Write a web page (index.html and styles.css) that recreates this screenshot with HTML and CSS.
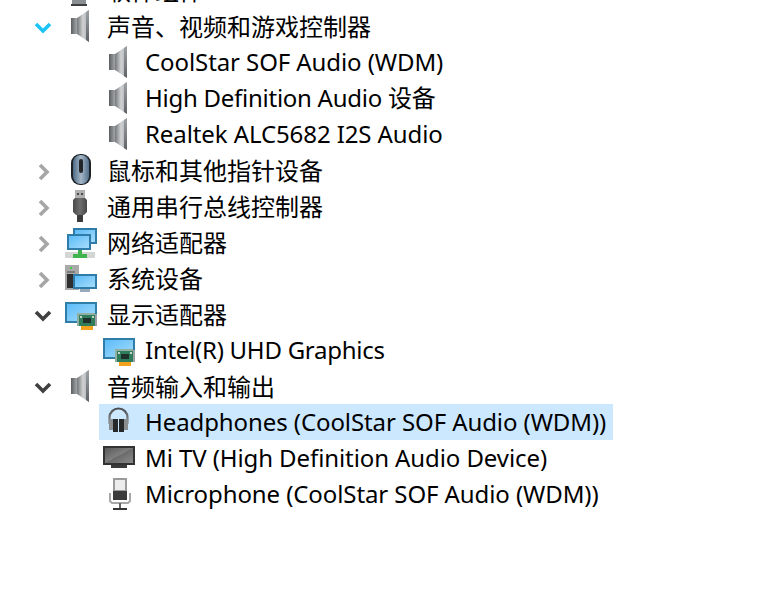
FILE: index.html
```html
<!DOCTYPE html>
<html lang="zh-CN">
<head>
<meta charset="utf-8">
<title>设备管理器</title>
<link rel="stylesheet" href="styles.css">
</head>
<body>
<svg class="defs" width="0" height="0" aria-hidden="true">
  <defs>
    <linearGradient id="cone" x1="0" x2="1" y1="0" y2="0">
      <stop offset="0" stop-color="#74787b"/>
      <stop offset=".5" stop-color="#cfd1d3"/>
      <stop offset="1" stop-color="#a9acaf"/>
    </linearGradient>
    <linearGradient id="block" x1="0" x2="1" y1="0" y2="0">
      <stop offset="0" stop-color="#5a5e62"/>
      <stop offset="1" stop-color="#a4a7aa"/>
    </linearGradient>
    <linearGradient id="rim" x1="0" x2="0" y1="0" y2="1">
      <stop offset="0" stop-color="#9ea3a8"/>
      <stop offset=".5" stop-color="#7e8388"/>
      <stop offset="1" stop-color="#5e6266"/>
    </linearGradient>
    <linearGradient id="screen" x1="0" x2="1" y1="0" y2="1">
      <stop offset="0" stop-color="#5cbcf8"/>
      <stop offset="1" stop-color="#a6dcfb"/>
    </linearGradient>
    <linearGradient id="tv" x1="0" x2="1" y1="0" y2="1">
      <stop offset="0" stop-color="#5a5a5a"/>
      <stop offset=".5" stop-color="#808080"/>
      <stop offset=".5" stop-color="#6a6a6a"/>
      <stop offset="1" stop-color="#8a8a8a"/>
    </linearGradient>
    <linearGradient id="mouse" x1="0" x2="1" y1="0" y2="0">
      <stop offset="0" stop-color="#4d6a86"/>
      <stop offset=".5" stop-color="#a5b6c6"/>
      <stop offset="1" stop-color="#52708c"/>
    </linearGradient>
    <linearGradient id="plug" x1="0" x2="1" y1="0" y2="0">
      <stop offset="0" stop-color="#4a4a4a"/>
      <stop offset=".5" stop-color="#6e6e6e"/>
      <stop offset="1" stop-color="#484848"/>
    </linearGradient>
    <linearGradient id="band" x1="0" x2="0" y1="0" y2="1">
      <stop offset="0" stop-color="#4c4f52"/>
      <stop offset="1" stop-color="#8e9194"/>
    </linearGradient>
    <symbol id="speaker" viewBox="0 0 32 32">
      <path fill="url(#cone)" d="M12 8 24 0V32L12 24Z"/>
      <path fill="url(#rim)" d="M21 2 24 0V32L21 30Z"/>
      <rect fill="url(#block)" x="6" y="8" width="6" height="16"/>
    </symbol>
    <symbol id="card" viewBox="0 0 32 32">
      <rect fill="#307da8" x="0" y="4" width="32" height="21"/>
      <rect fill="url(#screen)" x="2" y="6" width="28" height="17"/>
      <rect fill="#9aa0a4" x="30" y="16" width="2" height="12"/>
      <rect fill="#8fb0a0" x="12" y="15" width="18" height="13"/>
      <rect fill="#2f7d5a" x="14" y="17" width="16" height="11"/>
      <rect fill="#1f2f2a" x="18" y="20" width="8" height="5"/>
      <rect fill="#c6d6cc" x="15" y="18" width="2" height="2"/>
      <rect fill="#c6d6cc" x="27" y="18" width="2" height="2"/>
      <rect fill="#f2a21d" x="16" y="28" width="12" height="4"/>
    </symbol>
  </defs>
</svg>

<ul class="tree">
  <li class="row row-top">
    <svg class="chev chev-right" viewBox="0 0 18 18"><path d="M6 2l7 7-7 7"/></svg>
    <svg class="icon" viewBox="0 0 32 32"><rect fill="#3c3f42" x="6" y="30" width="16" height="2"/><rect fill="#8c8f92" x="7" y="26" width="14" height="4"/></svg>
    <span class="label">软件组件</span>
  </li>
  <li class="row">
    <svg class="chev chev-open chev-hot" viewBox="0 0 18 18"><path d="M2 5l7 7 7-7"/></svg>
    <svg class="icon"><use href="#speaker"/></svg>
    <span class="label">声音、视频和游戏控制器</span>
  </li>
  <li class="row row-child">
    <svg class="icon"><use href="#speaker"/></svg>
    <span class="label">CoolStar SOF Audio (WDM)</span>
  </li>
  <li class="row row-child">
    <svg class="icon"><use href="#speaker"/></svg>
    <span class="label label-tight">High Definition Audio 设备</span>
  </li>
  <li class="row row-child">
    <svg class="icon"><use href="#speaker"/></svg>
    <span class="label">Realtek ALC5682 I2S Audio</span>
  </li>
  <li class="row">
    <svg class="chev chev-right" viewBox="0 0 18 18"><path d="M6 2l7 7-7 7"/></svg>
    <svg class="icon" viewBox="0 0 32 32">
      <rect fill="#1d2226" x="6" y="0" width="20" height="31" rx="9"/>
      <rect fill="url(#mouse)" x="8" y="1" width="16" height="29" rx="7.5"/>
      <rect fill="#22262a" x="14" y="5" width="4" height="14" rx="2"/>
    </svg>
    <span class="label">鼠标和其他指针设备</span>
  </li>
  <li class="row">
    <svg class="chev chev-right" viewBox="0 0 18 18"><path d="M6 2l7 7-7 7"/></svg>
    <svg class="icon" viewBox="0 0 32 32">
      <rect fill="#b0b0b0" x="10" y="0" width="10" height="8"/>
      <rect fill="#4a4a4a" x="12" y="3" width="2" height="2"/>
      <rect fill="#4a4a4a" x="16" y="3" width="2" height="2"/>
      <path fill="url(#plug)" d="M10 8h10l2 2v12l-3 3H11l-3-3V10z"/>
      <rect fill="#3a3a3a" x="12" y="25" width="6" height="7"/>
    </svg>
    <span class="label">通用串行总线控制器</span>
  </li>
  <li class="row">
    <svg class="chev chev-right" viewBox="0 0 18 18"><path d="M6 2l7 7-7 7"/></svg>
    <svg class="icon" viewBox="0 0 32 32">
      <rect fill="#2f7ca8" x="8" y="2" width="24" height="16"/>
      <rect fill="url(#screen)" x="10" y="4" width="20" height="12"/>
      <rect fill="#d4d6d4" x="0" y="26" width="30" height="6"/>
      <rect fill="#3fb44c" x="8" y="28" width="14" height="4"/>
      <rect fill="#3fb44c" x="13" y="24" width="4" height="4"/>
      <rect fill="#2f7ca8" x="2" y="8" width="24" height="16"/>
      <rect fill="url(#screen)" x="4" y="10" width="20" height="12"/>
    </svg>
    <span class="label">网络适配器</span>
  </li>
  <li class="row">
    <svg class="chev chev-right" viewBox="0 0 18 18"><path d="M6 2l7 7-7 7"/></svg>
    <svg class="icon" viewBox="0 0 32 32">
      <rect fill="#a9a9a9" x="0" y="3" width="14" height="25"/>
      <rect fill="#2f2f2f" x="2" y="12" width="8" height="14"/>
      <rect fill="#7c7c7c" x="2" y="9" width="8" height="2"/>
      <rect fill="#39d04a" x="5" y="5" width="2" height="2"/>
      <rect fill="#2f7ca8" x="8" y="12" width="24" height="15"/>
      <rect fill="url(#screen)" x="10" y="14" width="20" height="11"/>
      <rect fill="#97a9bb" x="15" y="27" width="10" height="3"/>
    </svg>
    <span class="label">系统设备</span>
  </li>
  <li class="row">
    <svg class="chev chev-open" viewBox="0 0 18 18"><path d="M2 5l7 7 7-7"/></svg>
    <svg class="icon"><use href="#card"/></svg>
    <span class="label">显示适配器</span>
  </li>
  <li class="row row-child">
    <svg class="icon"><use href="#card"/></svg>
    <span class="label label-tight">Intel(R) UHD Graphics</span>
  </li>
  <li class="row">
    <svg class="chev chev-open" viewBox="0 0 18 18"><path d="M2 5l7 7 7-7"/></svg>
    <svg class="icon"><use href="#speaker"/></svg>
    <span class="label">音频输入和输出</span>
  </li>
  <li class="row row-child row-selected">
    <svg class="icon" viewBox="0 0 32 32">
      <path fill="none" stroke="url(#band)" stroke-width="2.2" d="M6.5 18v-6.500a9 9 0 0 1 18 0v6.500"/>
      <rect fill="#8b8e90" x="6" y="13" width="4" height="11"/>
      <rect fill="#8b8e90" x="21" y="13" width="4" height="11"/>
      <rect fill="#26282a" x="10" y="13" width="5" height="13"/>
      <rect fill="#26282a" x="16" y="13" width="5" height="13"/>
    </svg>
    <span class="label">Headphones (CoolStar SOF Audio (WDM))</span>
  </li>
  <li class="row row-child">
    <svg class="icon" viewBox="0 0 32 32">
      <rect fill="#333" x="0" y="4" width="32" height="19"/>
      <rect fill="url(#tv)" x="2" y="6" width="28" height="15"/>
      <rect fill="#3a3a3a" x="8" y="23" width="16" height="3"/>
    </svg>
    <span class="label">Mi TV (High Definition Audio Device)</span>
  </li>
  <li class="row row-child">
    <svg class="icon" viewBox="0 0 32 32">
      <rect fill="#9a9a9a" x="10" y="0" width="14" height="22"/>
      <rect fill="#ececec" x="12" y="2" width="10" height="10"/>
      <rect fill="#3c3c3c" x="10" y="13" width="14" height="9"/>
      <path fill="none" stroke="#a8a8a8" stroke-width="2" d="M7 15v8l2 2h16l2-2v-8"/>
      <rect fill="#666" x="16" y="25" width="2" height="6"/>
      <rect fill="#333" x="10" y="30" width="14" height="2"/>
    </svg>
    <span class="label">Microphone (CoolStar SOF Audio (WDM))</span>
  </li>
</ul>
</body>
</html>
```

FILE: styles.css
```css
html, body {
  margin: 0;
  padding: 0;
  height: 100%;
  overflow: hidden;
  background: #fff;
}

.defs {
  position: absolute;
}

.tree {
  list-style: none;
  margin: -28px 0 0;
  padding: 0;
  font-family: "Noto Sans", "Noto Sans CJK SC", sans-serif;
  font-size: 24px;
  color: #000;
}

.row {
  display: flex;
  align-items: center;
  height: 36px;
  padding-left: 34px;
}

.row-child {
  width: 510px;
  margin-left: 99px;
  padding-left: 4px;
}

.row-selected {
  background: #cce8ff;
}

.chev {
  flex: none;
  width: 18px;
  height: 18px;
  margin-top: 4px;
  margin-right: 13px;
  fill: none;
  stroke-width: 3.6;
}

.chev-right {
  stroke: #a6a6a6;
}

.chev-open {
  stroke: #404040;
}

.chev-hot {
  stroke: #1cc4fa;
}

.icon {
  flex: none;
  width: 32px;
  height: 32px;
  margin-right: 10px;
}

.label {
  white-space: nowrap;
  line-height: 36px;
  padding-top: 2px;
}

.row-child .label {
  padding-top: 0;
  letter-spacing: -0.09px;
}

.row-child .label-tight {
  letter-spacing: -0.26px;
}
```
